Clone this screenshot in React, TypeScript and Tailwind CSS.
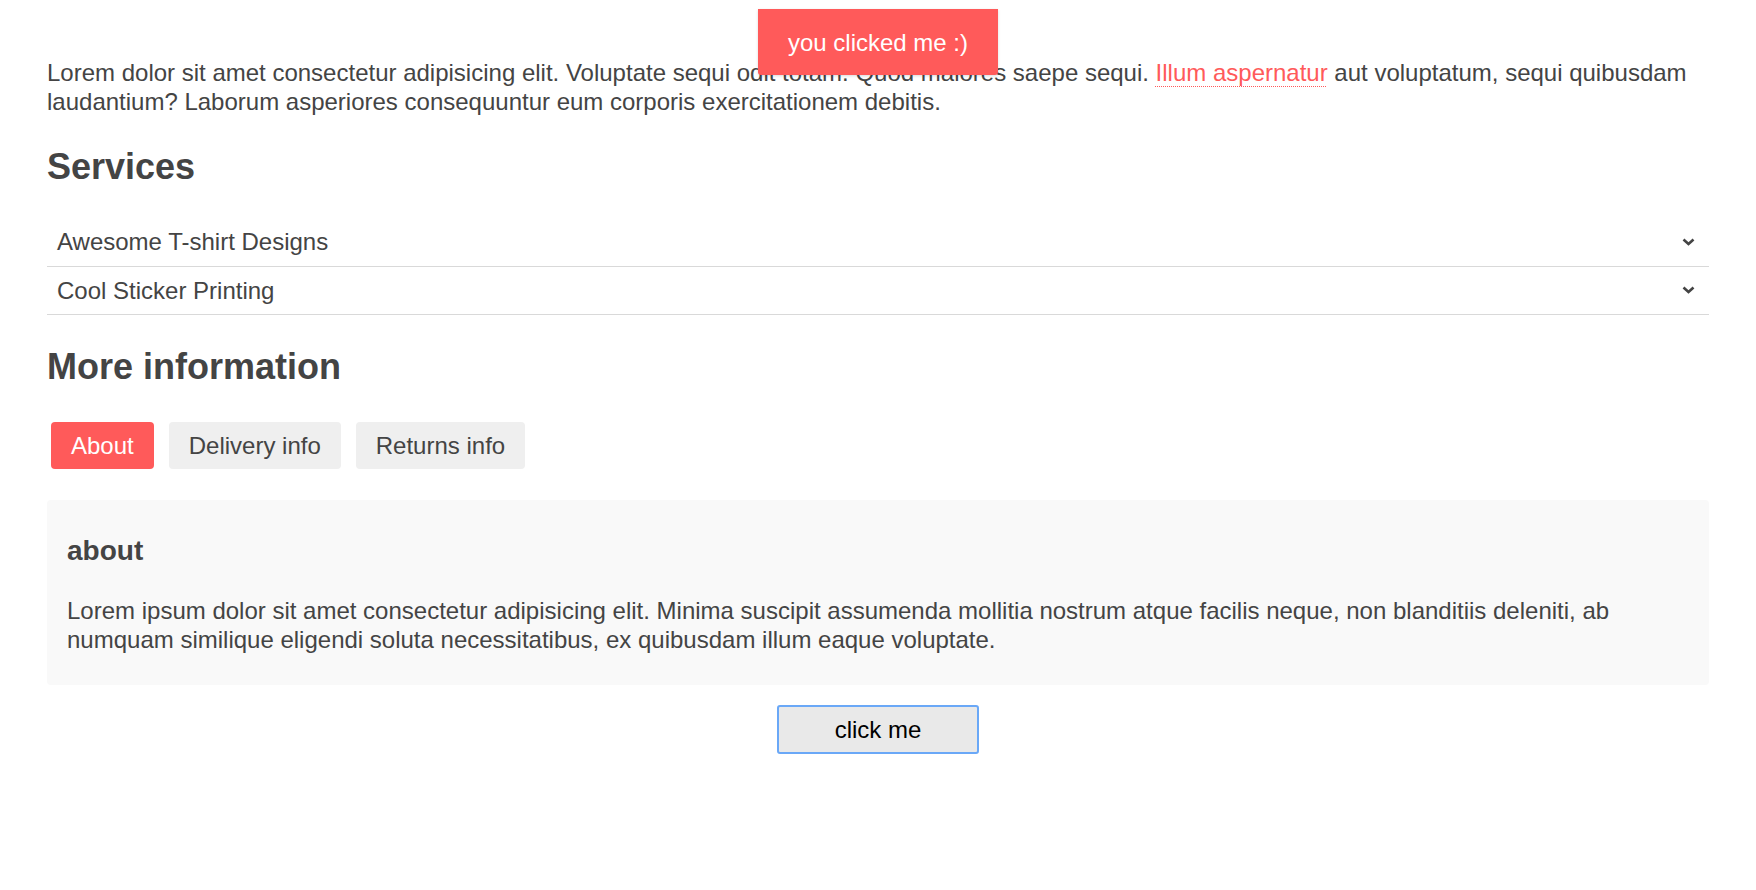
export default function App() {
  return (
    <div className="relative min-h-screen bg-white px-[47px] text-[24px] leading-[29px] text-[#444] font-['Liberation_Sans',Arial,sans-serif]">
      {/* Toast */}
      <div className="absolute left-1/2 top-[9px] flex h-[66px] w-[240px] -translate-x-1/2 items-center justify-center rounded-b-[3px] bg-[#ff5a5a] text-white shadow-[0_1px_3px_rgba(0,0,0,0.15)]">
        you clicked me :)
      </div>

      <p className="pt-[58px]">
        Lorem dolor sit amet consectetur adipisicing elit. Voluptate sequi odit totam. Quod maiores saepe sequi.{" "}
        <a className="text-[#ff5a5a] underline decoration-dotted decoration-1 underline-offset-[5px]">Illum aspernatur</a>{" "}
        aut voluptatum, sequi quibusdam laudantium? Laborum asperiores consequuntur eum corporis exercitationem debitis.
      </p>

      {/* Services */}
      <h2 className="mt-[30px] text-[36px] font-bold leading-[41px]">Services</h2>
      <div className="mt-[31px]">
        {["Awesome T-shirt Designs", "Cool Sticker Printing"].map((item) => (
          <div key={item} className="flex h-[48.5px] items-center justify-between border-b border-[#d9d9d9] pl-[10px] pr-[14px]">
            <span>{item}</span>
            <svg width="13" height="8" viewBox="0 0 13 8" fill="none">
              <polyline points="1.5,1.5 6.5,6 11.5,1.5" stroke="#444" strokeWidth="2.6" />
            </svg>
          </div>
        ))}
      </div>

      {/* More information */}
      <h2 className="mt-[31px] text-[36px] font-bold leading-[41px]">More information</h2>
      <div className="ml-[4px] mt-[35px] flex gap-[15px]">
        <button className="h-[47px] rounded-[4px] bg-[#ff5a5a] px-[20px] text-white">About</button>
        <button className="h-[47px] rounded-[4px] bg-[#efefef] px-[20px]">Delivery info</button>
        <button className="h-[47px] rounded-[4px] bg-[#efefef] px-[20px]">Returns info</button>
      </div>

      <div className="mt-[31px] rounded-[4px] bg-[#f9f9f9] px-[20px] pb-[31px] pt-[35px]">
        <h3 className="text-[28px] font-bold leading-[32px]">about</h3>
        <p className="mt-[29px]">
          Lorem ipsum dolor sit amet consectetur adipisicing elit. Minima suscipit assumenda mollitia nostrum atque facilis neque, non blanditiis deleniti, ab numquam similique eligendi soluta necessitatibus, ex quibusdam illum eaque voluptate.
        </p>
      </div>

      <div className="mt-[20px] flex justify-center">
        <button className="h-[49px] w-[202px] rounded-[3px] border-2 border-[#6aa8f7] bg-[#e9e9e9] text-black">click me</button>
      </div>
    </div>
  );
}
